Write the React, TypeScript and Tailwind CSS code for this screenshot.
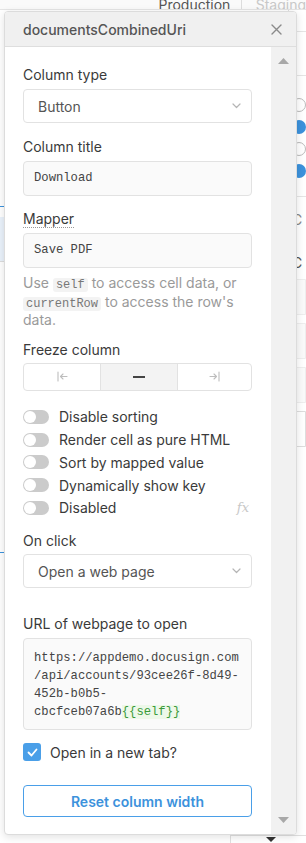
import React from 'react';

const Chevron = () => (
  <svg width="9" height="6" viewBox="0 0 9 6" fill="none" className="shrink-0">
    <path d="M1 1l3.5 3.5L8 1" stroke="#b5b5b5" strokeWidth="1.2" strokeLinecap="round" strokeLinejoin="round" />
  </svg>
);

const Toggle = ({ label, fx }: { label: string; fx?: boolean }) => (
  <div className="flex items-center h-[22.75px]">
    <div className="relative w-[26px] h-[14px] rounded-full bg-[#cbcbcb] shrink-0">
      <div className="absolute left-[1px] top-[1px] w-[12px] h-[12px] rounded-full bg-white" />
    </div>
    <span className="ml-[10px] text-[14px] text-[#3a3a3a] flex-1">{label}</span>
    {fx && (
      <span className="mr-[3px] text-[13px] italic text-[#c8c8c8] font-['DejaVu_Serif',serif]">fx</span>
    )}
  </div>
);

const Label = ({ children, dotted, tight }: { children: React.ReactNode; dotted?: boolean; tight?: boolean }) => (
  <div className={`h-[20px] text-[14px] leading-[20px] text-[#3a3a3a] ${tight ? 'mb-[3px]' : 'mb-[4px]'}`}>
    <span className={dotted ? 'border-b border-dotted border-[#999]' : ''}>{children}</span>
  </div>
);

const Select = ({ value }: { value: string }) => (
  <div className="flex items-center justify-between h-[34px] pl-[14px] pr-[10px] rounded-[4px] border border-[#e2e2e2] bg-white text-[14px] text-[#555]">
    <span>{value}</span>
    <Chevron />
  </div>
);

const mono = "font-['Liberation_Mono','DejaVu_Sans_Mono',monospace]";
const code = `px-[3px] rounded-[3px] bg-[#f3f3f3] text-[12px] leading-[12px] text-[#777] ${mono}`;

export default function App() {
  return (
    <div className="relative w-[306px] h-[843px] overflow-hidden bg-white font-['Inter',sans-serif]">
      {/* page behind the popover */}
      <div className="absolute inset-0 flex flex-col">
        <div className="flex h-[10px] border-b border-[#e5e5e5] bg-[#fafafa] overflow-hidden">
          <div className="w-[160px]" />
          <div className="w-[84px] -mt-[6px] text-[14px] text-[#555] border-r border-[#ddd]">Production</div>
          <div className="pl-[14px] -mt-[6px] text-[14px] text-[#c8c8c8]">Staging</div>
        </div>
        <div className="flex flex-1">
          <div className="w-[297px] flex flex-col">
            <div className="h-[196px]" />
            <div className="h-[1px] bg-[#3c92dc]" />
            <div className="h-[10px]" />
            <div className="h-[44px] bg-[#eaf2fb]" />
            <div className="h-[1px] bg-[#ddd]" />
            <div className="h-[290px]" />
            <div className="h-[1px] bg-[#3c92dc]" />
          </div>
          <div className="flex-1 flex flex-col border-l border-[#ddd]">
            <div className="h-[22px] border-b border-[#e5e5e5]" />
            <div className="h-[44px] border-b border-[#e5e5e5]" />
            <div className="ml-[3px] text-[13px] text-[#a46a1a] h-[20px]">f</div>
            <div className="ml-[3px] flex flex-col gap-[8px] mt-[2px]">
              <div className="w-[14px] h-[14px] rounded-full border border-[#bbb]" />
              <div className="w-[14px] h-[14px] rounded-full bg-[#3c92dc]" />
              <div className="w-[14px] h-[14px] rounded-full border border-[#bbb]" />
              <div className="w-[14px] h-[14px] rounded-full bg-[#3c92dc]" />
            </div>
            <div className="h-[1px] bg-[#e5e5e5] mt-[18px]" />
            <div className="ml-[3px] mt-[12px] text-[14px] text-[#888]">C</div>
            <div className="ml-[3px] mt-[22px] text-[14px] text-[#555]">C</div>
            <div className="ml-[3px] mt-[6px] flex flex-col gap-[8px]">
              <div className="h-[36px] rounded-l-[4px] border border-[#eee] bg-[#fafafa]" />
              <div className="h-[36px] rounded-l-[4px] border border-[#eee] bg-[#fafafa]" />
              <div className="h-[36px] rounded-l-[4px] border border-[#eee] bg-[#fafafa]" />
              <div className="h-[36px] rounded-l-[4px] border border-[#ddd] bg-white" />
            </div>
          </div>
        </div>
        <div className="absolute right-0 bottom-0 w-[76px] h-[8px] border-l border-t border-[#e0e0e0] bg-white flex justify-end pr-[30px]">
          <svg width="10" height="6" viewBox="0 0 10 6" className="mt-[1px]"><path d="M0 0h10L5 5z" fill="#333" /></svg>
        </div>
      </div>

      {/* popover */}
      <div className="absolute left-[4px] top-[11px] w-[293px] h-[824px] flex flex-col rounded-[4px] bg-white border border-[#dcdcdc] shadow-[0_2px_8px_rgba(0,0,0,0.12)] overflow-hidden">
        <div className="flex items-center justify-between h-[35px] shrink-0 pl-[18px] pr-[14px] bg-[#f0f0f0] border-b border-[#dedede]">
          <span className="text-[14px] font-medium text-[#555]">documentsCombinedUri</span>
          <svg width="11" height="11" viewBox="0 0 11 11" fill="none">
            <path d="M1 1l9 9M10 1l-9 9" stroke="#8a8a8a" strokeWidth="1.4" strokeLinecap="round" />
          </svg>
        </div>
        <div className="flex flex-1 min-h-0">
          <div className="flex-1 flex flex-col pt-[18px] pl-[18px] pr-[19px]">
            <Label>Column type</Label>
            <Select value="Button" />

            <div className="mt-[14px]" />
            <Label>Column title</Label>
            <div className={`flex items-center h-[35px] px-[10px] rounded-[4px] border border-[#e2e2e2] bg-[#fafafa] text-[12.2px] text-[#444] ${mono}`}>Download</div>

            <div className="mt-[13px]" />
            <Label dotted>Mapper</Label>
            <div className={`flex items-center h-[35px] px-[10px] rounded-[4px] border border-[#e2e2e2] bg-[#fafafa] text-[12.2px] text-[#444] ${mono}`}>Save PDF</div>

            <div className="mt-[6px] text-[14px] leading-[18.5px] text-[#9a9a9a]">
              Use <code className={code}>self</code> to access cell data, or{' '}
              <code className={code}>currentRow</code> to access the row's data.
            </div>

            <div className="mt-[10px]" />
            <Label tight>Freeze column</Label>
            <div className="flex h-[28px] rounded-[4px] border border-[#e2e2e2] overflow-hidden">
              <div className="w-[77px] flex items-center justify-center border-r border-[#e2e2e2]">
                <svg width="11" height="11" viewBox="0 0 11 11" fill="none">
                  <path d="M1 1v9M10 5.5H3.5M6 3L3.5 5.5 6 8" stroke="#bdbdbd" strokeWidth="1.1" strokeLinecap="round" strokeLinejoin="round" />
                </svg>
              </div>
              <div className="w-[77px] flex items-center justify-center border-r border-[#e2e2e2] bg-[#f3f3f3]">
                <div className="w-[12px] h-[2px] bg-[#444]" />
              </div>
              <div className="flex-1 flex items-center justify-center">
                <svg width="11" height="11" viewBox="0 0 11 11" fill="none">
                  <path d="M10 1v9M1 5.5h6.5M5 3l2.5 2.5L5 8" stroke="#bdbdbd" strokeWidth="1.1" strokeLinecap="round" strokeLinejoin="round" />
                </svg>
              </div>
            </div>

            <div className="mt-[15px] flex flex-col">
              <Toggle label="Disable sorting" />
              <Toggle label="Render cell as pure HTML" />
              <Toggle label="Sort by mapped value" />
              <Toggle label="Dynamically show key" />
              <Toggle label="Disabled" fx />
            </div>

            <div className="mt-[12px]" />
            <Label tight>On click</Label>
            <Select value="Open a web page" />

            <div className="mt-[26px]" />
            <Label>URL of webpage to open</Label>
            <div className={`pt-[10px] pb-[8px] px-[10px] rounded-[4px] border border-[#e2e2e2] bg-[#fafafa] text-[12.2px] leading-[18px] text-[#444] ${mono}`}>
              <div>https://appdemo.docusign.com</div>
              <div>/api/accounts/93cee26f-8d49-</div>
              <div>452b-b0b5-</div>
              <div>
                cbcfceb07a6b<span className="text-[#3a9a3a] bg-[#edf8e9]">{'{{self}}'}</span>
              </div>
            </div>

            <div className="mt-[13px] flex items-center h-[18px]">
              <div className="w-[18px] h-[18px] rounded-[3px] bg-[#4a9fe8] flex items-center justify-center">
                <svg width="11" height="9" viewBox="0 0 11 9" fill="none">
                  <path d="M1.5 4.5l3 3 5-6" stroke="#fff" strokeWidth="1.8" strokeLinecap="round" strokeLinejoin="round" />
                </svg>
              </div>
              <span className="ml-[9px] text-[14px] text-[#3a3a3a]">Open in a new tab?</span>
            </div>

            <button className="mt-[24px] h-[32px] rounded-[4px] border border-[#4a9fe8] bg-white text-[14px] font-semibold text-[#3c92dc]">
              Reset column width
            </button>
          </div>
          <div className="w-[25px] shrink-0 bg-[#f1f1f1] flex flex-col items-center justify-between pt-[11px] pb-[11px]">
            <svg width="11" height="6" viewBox="0 0 11 6"><path d="M0 6h11L5.5 0z" fill="#a8a8a8" /></svg>
            <svg width="11" height="6" viewBox="0 0 11 6"><path d="M0 0h11L5.5 6z" fill="#a8a8a8" /></svg>
          </div>
        </div>
      </div>
    </div>
  );
}
